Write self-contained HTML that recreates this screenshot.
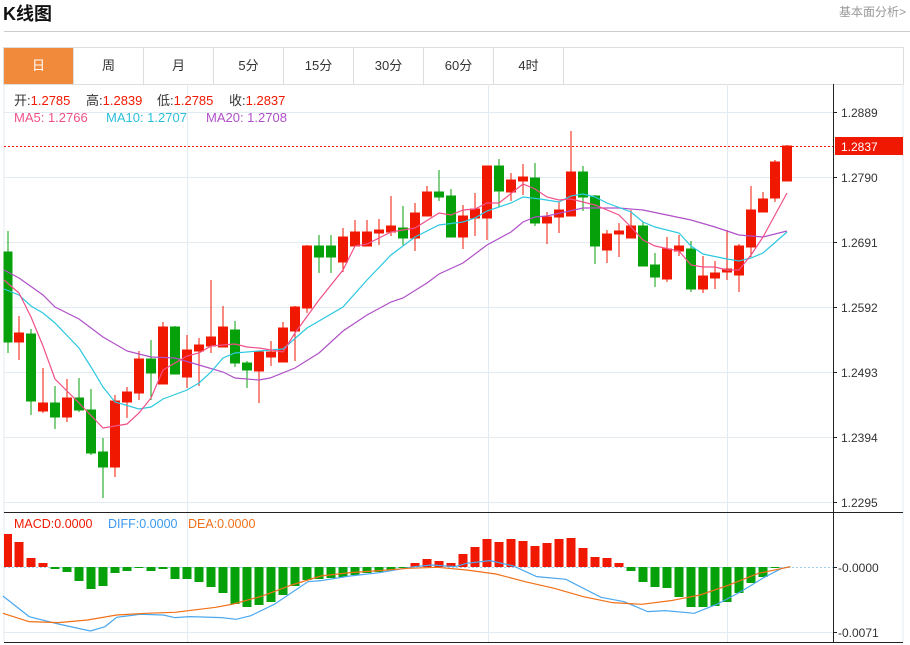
<!DOCTYPE html>
<html><head><meta charset="utf-8"><style>
body{margin:0;width:910px;height:645px;background:#fff;overflow:hidden;font-family:"Liberation Sans","Noto Sans CJK SC",sans-serif;position:relative}
.t{position:absolute;left:3px;top:0px;font-size:18px;font-weight:bold;color:#111}
.more{position:absolute;right:4px;top:3px;font-size:12px;color:#999}
.hr{position:absolute;left:4px;top:31px;width:906px;height:1px;background:#ccc}
.tabs{position:absolute;left:3px;top:47px;width:899px;height:36px;border:1px solid #ddd;display:flex}
.tabs div{width:69px;border-right:1px solid #ddd;text-align:center;line-height:36px;font-size:13px;color:#333}
.tabs div.on{background:#f28a3c;color:#fff}
svg{position:absolute;left:0;top:0}
</style></head><body>
<div class="t">K线图</div>
<div class="more">基本面分析&gt;</div>
<div class="hr"></div>
<div class="tabs"><div class="on">日</div><div>周</div><div>月</div><div>5分</div><div>15分</div><div>30分</div><div>60分</div><div>4时</div></div>
<svg width="910" height="645" viewBox="0 0 910 645">
<g stroke="#e3ebf2" stroke-width="1">
<line x1="4" y1="84" x2="4" y2="643"/>
<line x1="903" y1="84" x2="903" y2="643"/>
<line x1="187.5" y1="84" x2="187.5" y2="643"/>
<line x1="488.5" y1="84" x2="488.5" y2="643"/>
<line x1="727.5" y1="84" x2="727.5" y2="643"/>
<line x1="4" y1="112.5" x2="833" y2="112.5"/><line x1="4" y1="177.5" x2="833" y2="177.5"/>
<line x1="4" y1="242.5" x2="833" y2="242.5"/><line x1="4" y1="307.5" x2="833" y2="307.5"/>
<line x1="4" y1="372.5" x2="833" y2="372.5"/><line x1="4" y1="437.5" x2="833" y2="437.5"/>
<line x1="4" y1="502.5" x2="833" y2="502.5"/><line x1="4" y1="632.5" x2="833" y2="632.5"/>
</g>
<line x1="4" y1="512.5" x2="903" y2="512.5" stroke="#222"/>
<line x1="4" y1="642.5" x2="903" y2="642.5" stroke="#222"/>
<line x1="833.5" y1="84" x2="833.5" y2="643" stroke="#222"/>
<g stroke="#222"><line x1="833" y1="112.5" x2="837" y2="112.5"/><line x1="833" y1="177.5" x2="837" y2="177.5"/><line x1="833" y1="242.5" x2="837" y2="242.5"/><line x1="833" y1="307.5" x2="837" y2="307.5"/><line x1="833" y1="372.5" x2="837" y2="372.5"/><line x1="833" y1="437.5" x2="837" y2="437.5"/><line x1="833" y1="502.5" x2="837" y2="502.5"/><line x1="833" y1="567.5" x2="837" y2="567.5"/><line x1="833" y1="632.5" x2="837" y2="632.5"/></g>
<g font-size="12" fill="#333" font-family="Liberation Sans,sans-serif">
<text x="841" y="117">1.2889</text><text x="841" y="182">1.2790</text><text x="841" y="247">1.2691</text><text x="841" y="312">1.2592</text><text x="841" y="377">1.2493</text><text x="841" y="442">1.2394</text><text x="841" y="507">1.2295</text><text x="838" y="572">-0.0000</text><text x="838" y="637">-0.0071</text>
</g>
<line x1="4" y1="146.5" x2="833" y2="146.5" stroke="#f01800" stroke-dasharray="2,2"/>
<rect x="835" y="137" width="68" height="18" fill="#f01800"/>
<text x="841" y="151" font-size="12" fill="#fff">1.2837</text>
<line x1="4" y1="567.5" x2="833" y2="567.5" stroke="#9fd0f0" stroke-dasharray="2,2"/>
<g font-size="13">
<text x="14" y="105" fill="#333">开:<tspan fill="#f01800">1.2785</tspan></text>
<text x="86" y="105" fill="#333">高:<tspan fill="#f01800">1.2839</tspan></text>
<text x="157" y="105" fill="#333">低:<tspan fill="#f01800">1.2785</tspan></text>
<text x="229" y="105" fill="#333">收:<tspan fill="#f01800">1.2837</tspan></text>
<text x="14" y="122" fill="#f0508a">MA5: 1.2766</text>
<text x="106" y="122" fill="#2cc0d8">MA10: 1.2707</text>
<text x="206" y="122" fill="#b050c8">MA20: 1.2708</text>
</g>
<g font-size="12.5">
<text x="14" y="528" fill="#f01800">MACD:0.0000</text>
<text x="108" y="528" fill="#3a9af0">DIFF:0.0000</text>
<text x="188" y="528" fill="#f07018">DEA:0.0000</text>
</g>
<g stroke-width="1">
<g stroke="#06a00a" fill="#06a00a">
<line x1="8" y1="231" x2="8" y2="353"/><rect x="4" y="252" width="8" height="90"/>
<line x1="31" y1="329" x2="31" y2="415"/><rect x="26.5" y="334" width="9" height="67"/>
<line x1="55" y1="386" x2="55" y2="429"/><rect x="50.5" y="403" width="9" height="14"/>
<line x1="79" y1="378" x2="79" y2="412"/><rect x="74.5" y="398" width="9" height="12"/>
<line x1="91" y1="389" x2="91" y2="455"/><rect x="86.5" y="410" width="9" height="43"/>
<line x1="103" y1="438" x2="103" y2="498"/><rect x="98.5" y="452" width="9" height="15"/>
<line x1="151" y1="340" x2="151" y2="400"/><rect x="146.5" y="359" width="9" height="14"/>
<line x1="175" y1="326" x2="175" y2="374"/><rect x="170.5" y="327" width="9" height="47"/>
<line x1="235" y1="321" x2="235" y2="367"/><rect x="230.5" y="330" width="9" height="33"/>
<line x1="247" y1="361" x2="247" y2="388"/><rect x="242.5" y="363" width="9" height="7"/>
<line x1="319" y1="235" x2="319" y2="273"/><rect x="314.5" y="246" width="9" height="11"/>
<line x1="331" y1="235" x2="331" y2="273"/><rect x="326.5" y="246" width="9" height="11"/>
<line x1="403" y1="206" x2="403" y2="245"/><rect x="398.5" y="228" width="9" height="10"/>
<line x1="439" y1="170" x2="439" y2="201"/><rect x="434.5" y="192" width="9" height="5"/>
<line x1="451" y1="189" x2="451" y2="237"/><rect x="446.5" y="196" width="9" height="41"/>
<line x1="499" y1="159" x2="499" y2="207"/><rect x="494.5" y="166" width="9" height="25"/>
<line x1="535" y1="163" x2="535" y2="226"/><rect x="530.5" y="178" width="9" height="45"/>
<line x1="583" y1="166" x2="583" y2="211"/><rect x="578.5" y="172" width="9" height="25"/>
<line x1="595" y1="195" x2="595" y2="264"/><rect x="590.5" y="196" width="9" height="50"/>
<line x1="643" y1="222" x2="643" y2="266"/><rect x="638.5" y="226" width="9" height="40"/>
<line x1="655" y1="253" x2="655" y2="287"/><rect x="650.5" y="265" width="9" height="12"/>
<line x1="691" y1="241" x2="691" y2="292"/><rect x="686.5" y="249" width="9" height="40"/>
</g>
<g stroke="#f01800" fill="#f01800">
<line x1="19" y1="316" x2="19" y2="360"/><rect x="14.5" y="333" width="9" height="9"/>
<line x1="43" y1="368" x2="43" y2="413"/><rect x="38.5" y="403" width="9" height="8"/>
<line x1="67" y1="379" x2="67" y2="422"/><rect x="62.5" y="398" width="9" height="19"/>
<line x1="115" y1="395" x2="115" y2="477"/><rect x="110.5" y="401" width="9" height="66"/>
<line x1="127" y1="387" x2="127" y2="418"/><rect x="122.5" y="392" width="9" height="10"/>
<line x1="139" y1="351" x2="139" y2="400"/><rect x="134.5" y="359" width="9" height="34"/>
<line x1="163" y1="322" x2="163" y2="384"/><rect x="158.5" y="327" width="9" height="57"/>
<line x1="187" y1="335" x2="187" y2="388"/><rect x="182.5" y="350" width="9" height="27"/>
<line x1="199" y1="338" x2="199" y2="386"/><rect x="194.5" y="345" width="9" height="6"/>
<line x1="211" y1="280" x2="211" y2="353"/><rect x="206.5" y="337" width="9" height="9"/>
<line x1="223" y1="306" x2="223" y2="347"/><rect x="218.5" y="327" width="9" height="20"/>
<line x1="259" y1="352" x2="259" y2="403"/><rect x="254.5" y="352" width="9" height="19"/>
<line x1="271" y1="341" x2="271" y2="366"/><rect x="266.5" y="352" width="9" height="5"/>
<line x1="283" y1="322" x2="283" y2="362"/><rect x="278.5" y="328" width="9" height="34"/>
<line x1="295" y1="306" x2="295" y2="361"/><rect x="290.5" y="307" width="9" height="24"/>
<line x1="307" y1="245" x2="307" y2="313"/><rect x="302.5" y="246" width="9" height="62"/>
<line x1="343" y1="228" x2="343" y2="272"/><rect x="338.5" y="237" width="9" height="25"/>
<line x1="355" y1="220" x2="355" y2="246"/><rect x="350.5" y="232" width="9" height="14"/>
<line x1="367" y1="220" x2="367" y2="246"/><rect x="362.5" y="232" width="9" height="14"/>
<line x1="379" y1="219" x2="379" y2="245"/><rect x="374.5" y="230" width="9" height="3"/>
<line x1="391" y1="196" x2="391" y2="236"/><rect x="386.5" y="226" width="9" height="6"/>
<line x1="415" y1="203" x2="415" y2="251"/><rect x="410.5" y="213" width="9" height="25"/>
<line x1="427" y1="186" x2="427" y2="216"/><rect x="422.5" y="192" width="9" height="24"/>
<line x1="463" y1="205" x2="463" y2="249"/><rect x="458.5" y="216" width="9" height="21"/>
<line x1="475" y1="193" x2="475" y2="236"/><rect x="470.5" y="209" width="9" height="9"/>
<line x1="487" y1="166" x2="487" y2="240"/><rect x="482.5" y="166" width="9" height="52"/>
<line x1="511" y1="173" x2="511" y2="201"/><rect x="506.5" y="180" width="9" height="12"/>
<line x1="523" y1="164" x2="523" y2="195"/><rect x="518.5" y="177" width="9" height="4"/>
<line x1="547" y1="212" x2="547" y2="244"/><rect x="542.5" y="217" width="9" height="6"/>
<line x1="559" y1="202" x2="559" y2="233"/><rect x="554.5" y="210" width="9" height="7"/>
<line x1="571" y1="131" x2="571" y2="216"/><rect x="566.5" y="172" width="9" height="44"/>
<line x1="607" y1="230" x2="607" y2="263"/><rect x="602.5" y="234" width="9" height="16"/>
<line x1="619" y1="223" x2="619" y2="257"/><rect x="614.5" y="231" width="9" height="3"/>
<line x1="631" y1="210" x2="631" y2="238"/><rect x="626.5" y="226" width="9" height="12"/>
<line x1="667" y1="237" x2="667" y2="282"/><rect x="662.5" y="249" width="9" height="30"/>
<line x1="679" y1="235" x2="679" y2="256"/><rect x="674.5" y="246" width="9" height="5"/>
<line x1="703" y1="256" x2="703" y2="293"/><rect x="698.5" y="276" width="9" height="13"/>
<line x1="715" y1="261" x2="715" y2="289"/><rect x="710.5" y="273" width="9" height="5"/>
<line x1="727" y1="230" x2="727" y2="280"/><rect x="722.5" y="269" width="9" height="3"/>
<line x1="739" y1="244" x2="739" y2="292"/><rect x="734.5" y="246" width="9" height="29"/>
<line x1="751" y1="186" x2="751" y2="257"/><rect x="746.5" y="210" width="9" height="37"/>
<line x1="763" y1="192" x2="763" y2="212"/><rect x="758.5" y="199" width="9" height="13"/>
<line x1="775" y1="160" x2="775" y2="202"/><rect x="770.5" y="162" width="9" height="36"/>
<line x1="787" y1="145" x2="787" y2="181"/><rect x="782.5" y="146" width="9" height="35"/>
</g>
</g>
<g fill="none" stroke-width="1.2">
<polyline stroke="#b050c8" points="4,270 19,278 43,295 55,307 79,319 103,337 127,351 151,357 175,358 199,365 223,372 235,378 259,380 270,378 295,368 319,353 343,331 367,315 391,302 403,298 427,283 439,274 463,263 487,245 511,232 523,222 535,217 547,216 583,208 619,208 643,210 667,215 691,220 715,227 739,235 763,237 787,231"/>
<polyline stroke="#2cc8e0" points="4,289 19,295 31,306 43,313 55,323 79,348 91,367 103,387 115,402 139,409 151,407 163,399 187,390 199,383 211,372 223,358 235,353 259,351 283,349 307,328 343,307 367,280 391,255 415,237 439,225 463,222 475,218 487,211 511,203 523,197 540,199 559,202 571,196 583,194 595,197 607,203 631,212 643,222 655,227 679,233 691,246 703,254 727,259 739,261 751,258 763,253 787,232"/>
<polyline stroke="#f0508a" points="4,280 19,293 31,317 43,346 55,379 67,391 79,403 103,428 115,426 127,424 139,413 151,398 163,370 175,363 187,356 199,353 211,346 235,344 247,347 259,348 283,352 295,333 319,300 343,270 355,246 367,244 391,232 415,228 439,213 451,215 463,210 475,209 487,203 499,203 523,184 535,189 547,197 559,200 571,199 595,205 619,215 631,227 643,240 655,246 679,251 691,265 703,267 715,267 727,270 739,270 751,255 763,237 787,193"/>
</g>
<g fill="#f01800">
<rect x="4" y="534" width="8" height="33"/><rect x="14.5" y="542" width="9" height="25"/><rect x="26.5" y="558" width="9" height="9"/><rect x="38.5" y="563" width="9" height="4"/>
<rect x="410.5" y="563" width="9" height="4"/><rect x="422.5" y="559" width="9" height="8"/><rect x="434.5" y="561" width="9" height="6"/><rect x="446.5" y="563" width="9" height="4"/><rect x="458.5" y="554" width="9" height="13"/><rect x="470.5" y="547" width="9" height="20"/><rect x="482.5" y="539" width="9" height="28"/><rect x="494.5" y="542" width="9" height="25"/><rect x="506.5" y="539" width="9" height="28"/><rect x="518.5" y="541" width="9" height="26"/><rect x="530.5" y="546" width="9" height="21"/><rect x="542.5" y="543" width="9" height="24"/><rect x="554.5" y="539" width="9" height="28"/><rect x="566.5" y="538" width="9" height="29"/><rect x="578.5" y="548" width="9" height="19"/><rect x="590.5" y="557" width="9" height="10"/><rect x="602.5" y="558" width="9" height="9"/><rect x="614.5" y="563" width="9" height="4"/>
</g>
<g fill="#06a00a">
<rect x="50.5" y="567" width="9" height="2"/><rect x="62.5" y="567" width="9" height="5"/><rect x="74.5" y="567" width="9" height="14"/><rect x="86.5" y="567" width="9" height="22"/><rect x="98.5" y="567" width="9" height="19"/><rect x="110.5" y="567" width="9" height="6"/><rect x="122.5" y="567" width="9" height="4"/><rect x="134.5" y="567" width="9" height="1"/><rect x="146.5" y="567" width="9" height="4"/><rect x="158.5" y="567" width="9" height="2"/><rect x="170.5" y="567" width="9" height="12"/><rect x="182.5" y="567" width="9" height="12"/><rect x="194.5" y="567" width="9" height="15"/><rect x="206.5" y="567" width="9" height="20"/><rect x="218.5" y="567" width="9" height="26"/><rect x="230.5" y="567" width="9" height="37"/><rect x="242.5" y="567" width="9" height="40"/><rect x="254.5" y="567" width="9" height="38"/><rect x="266.5" y="567" width="9" height="35"/><rect x="278.5" y="567" width="9" height="28"/><rect x="290.5" y="567" width="9" height="19"/><rect x="302.5" y="567" width="9" height="13"/><rect x="314.5" y="567" width="9" height="12"/><rect x="326.5" y="567" width="9" height="11"/><rect x="338.5" y="567" width="9" height="10"/><rect x="350.5" y="567" width="9" height="8"/><rect x="362.5" y="567" width="9" height="6"/><rect x="374.5" y="567" width="9" height="5"/><rect x="386.5" y="567" width="9" height="3"/><rect x="398.5" y="567" width="9" height="1"/>
<rect x="626.5" y="567" width="9" height="4"/><rect x="638.5" y="567" width="9" height="15"/><rect x="650.5" y="567" width="9" height="20"/><rect x="662.5" y="567" width="9" height="21"/><rect x="674.5" y="567" width="9" height="30"/><rect x="686.5" y="567" width="9" height="40"/><rect x="698.5" y="567" width="9" height="40"/><rect x="710.5" y="567" width="9" height="39"/><rect x="722.5" y="567" width="9" height="35"/><rect x="734.5" y="567" width="9" height="26"/><rect x="746.5" y="567" width="9" height="16"/><rect x="758.5" y="567" width="9" height="10"/><rect x="770.5" y="567" width="9" height="1"/>
</g>
<g transform="translate(0,500) scale(0.5834,0.3333)" fill="none" stroke-width="1.2">
<polyline vector-effect="non-scaling-stroke" stroke="#4aa8f0" points="5,288 50,350 100,372 155,393 180,380 200,352 240,343 280,345 300,353 325,350 380,353 405,358 430,347 470,313 528,245 550,242 600,228 650,218 710,200 740,195 780,200 800,190 840,182 880,198 920,230 970,238 1030,292 1070,305 1110,335 1140,332 1190,340 1230,312 1270,275 1310,232 1340,205 1355,200"/>
<polyline vector-effect="non-scaling-stroke" stroke="#f07018" points="5,340 50,365 100,368 150,360 200,345 250,340 300,337 370,322 400,312 450,288 500,255 550,228 600,218 650,212 700,205 750,202 800,210 850,222 900,245 950,265 1000,290 1050,308 1100,313 1150,302 1200,285 1250,255 1300,220 1355,200"/>
</g>
</svg>
</body></html>
